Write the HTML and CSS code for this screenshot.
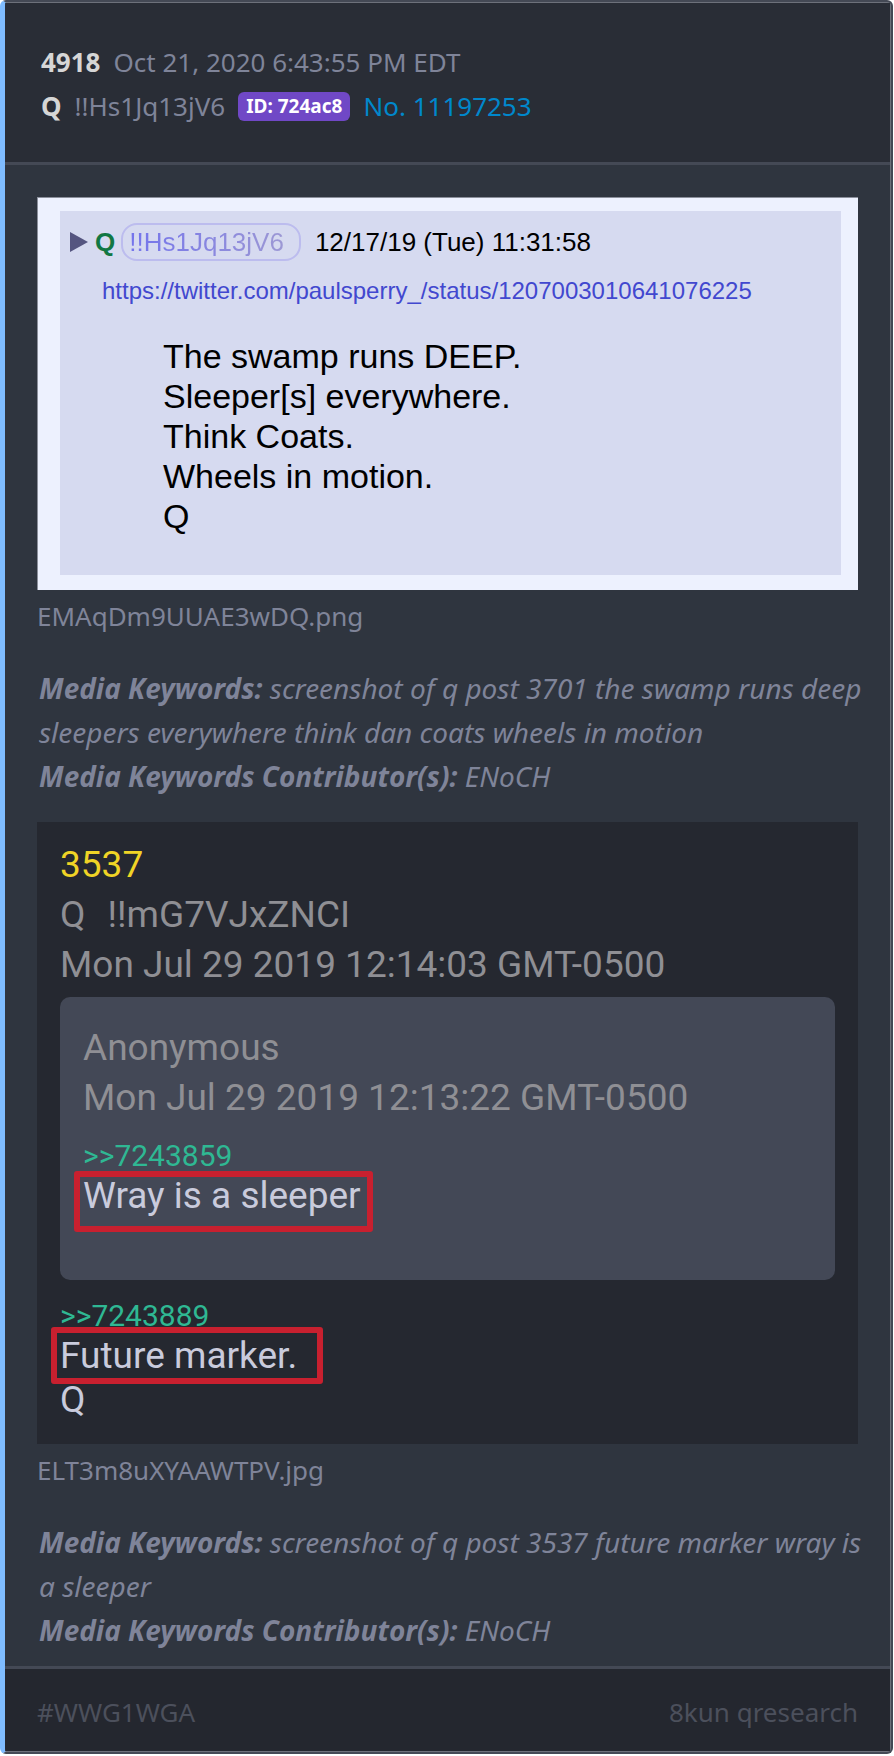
FILE: index.html
```
<!DOCTYPE html>
<html lang="en">
<head>
    <meta charset="UTF-8">
    <meta name="viewport" content="width=device-width, initial-scale=1.0">
    <title>Post 4918</title>
    <link rel="stylesheet" href="styles.css">
</head>
<body>

    <article class="post">

        <!-- Post Header -->
        <header class="post-header">
            <div class="meta">
                <strong>4918</strong>
                <time datetime="2020-10-21T18:43:55-04:00">Oct 21, 2020 6:43:55 PM EDT</time>
            </div>
            <div class="meta">
                <strong>Q</strong>
                <span>!!Hs1Jq13jV6</span>
                <span class="badge">ID: 724ac8</span>
                <a href="#">No. 11197253</a>
            </div>
        </header>

        <!-- Post Media -->
        <main class="post-body">
            <figure class="media">
                <div class="board">
                    <div class="board-post">
                        <div class="board-head">
                            <svg class="arrow" viewBox="0 0 18 20" aria-hidden="true"><path d="M0 0L18 10L0 20Z"/></svg>
                            <b>Q</b>
                            <span class="trip"><span>!!Hs1Jq13jV6</span></span>
                            <span>12/17/19 (Tue) 11:31:58</span>
                        </div>
                        <a class="board-link" href="#">https://twitter.com/paulsperry_/status/1207003010641076225</a>
                        <p class="board-text">The swamp runs DEEP.<br>Sleeper[s] everywhere.<br>Think Coats.<br>Wheels in motion.<br>Q</p>
                    </div>
                </div>
                <figcaption>EMAqDm9UUAE3wDQ.png</figcaption>
            </figure>
            <p class="keywords">
                <strong>Media Keywords:</strong> screenshot of q post 3701 the swamp runs deep sleepers everywhere think dan coats wheels in motion<br>
                <strong>Media Keywords Contributor(s):</strong> ENoCH
            </p>

            <figure class="media">
                <div class="drop">
                    <p class="number">3537</p>
                    <p><span class="name">Q</span>!!mG7VJxZNCI</p>
                    <p>Mon Jul 29 2019 12:14:03 GMT-0500</p>
                    <div class="quote">
                        <p>Anonymous</p>
                        <p>Mon Jul 29 2019 12:13:22 GMT-0500</p>
                        <a class="ref" href="#">&gt;&gt;7243859</a>
                        <p class="marked">Wray is a sleeper</p>
                    </div>
                    <a class="ref" href="#">&gt;&gt;7243889</a>
                    <p class="marked marked-reply">Future marker.</p>
                    <p class="sign">Q</p>
                </div>
                <figcaption>ELT3m8uXYAAWTPV.jpg</figcaption>
            </figure>
            <p class="keywords">
                <strong>Media Keywords:</strong> screenshot of q post 3537 future marker wray is a sleeper<br>
                <strong>Media Keywords Contributor(s):</strong> ENoCH
            </p>
        </main>

        <!-- Post Footer -->
        <footer class="post-footer">
            <span>#WWG1WGA</span>
            <span>8kun qresearch</span>
        </footer>

    </article>

</body>
</html>
```
FILE: styles.css
```
/* General Styles */
* { margin: 0; padding: 0; box-sizing: border-box; }
body { background: #fff; color: #7f8499; font: 26px/44px "Noto Sans", sans-serif; }
a { text-decoration: none; }

/* Post Card */
.post { margin: 0 1px 2px 0; padding: 1px 1px 1px 0; background: #6d717b; overflow: hidden;
    border: 2px solid #444955; border-left: 5px solid #7fbcff; border-radius: 6px; }

/* Header */
.post-header { padding: 37px 32px 34px 36px; background: #292d36; border-bottom: 3px solid #444955; }
.meta { display: flex; flex-wrap: wrap; align-items: center; column-gap: 13px; }
.meta strong { color: #d6d6d6; }
.meta a { color: #0088cc; }
.badge { padding: 0 8px; border-radius: 6px; background: #7048c6; color: #fff;
    font-size: 19px; font-weight: bold; line-height: 29px; }

/* Body */
.post-body { padding: 32px 32px 14px; background: #2f353f; }
figcaption { margin-top: 4px; }
.keywords { margin: 28px -10px 24px 0; padding-left: 2px; font-size: 28px; font-style: italic; }
.keywords:last-child { margin-bottom: 0; }

/* Imageboard capture */
.board { padding: 13px 17px 15px 22px; background: #edf1fe; border: 1px solid #8b8f9b; border-width: 1px 0 0 1px;
    font-family: "Liberation Sans", Arial, sans-serif; color: #000; }
.board-post { padding: 12px 10px 39px; background: #d6daf0; }
.board-head { display: flex; align-items: center; font-size: 26px; line-height: 34px; }
.arrow { width: 18px; height: 20px; margin-right: 7px; fill: #555580; }
.board-head b { margin-right: 6px; color: #117743; }
.trip { margin-right: 14px; padding: 0 15px 0 6px; border: 2px solid #bcbcee; border-radius: 16px; }
.trip span { background: linear-gradient(90deg, #7474ec, #9c98d4); background-clip: text; color: transparent; }
.board-link { display: block; margin: 13px 0 28px 32px; font-size: 24px; line-height: 34px; color: #4248cf; }
.board-text { margin-left: 93px; font-size: 34px; line-height: 40px; }

/* Dark capture */
.drop { padding: 18px 23px 28px; background: #252830; font: 37px/50px Roboto, sans-serif; color: #8f8f94; }
.number { color: #f0d426; }
.name { margin-right: 22px; }
.quote { margin: 7px 0 18px; padding: 26px 23px 48px; border-radius: 10px; background: #434856; }
.ref { display: block; font-size: 30px; line-height: 36px; color: #2fb893; }
.quote .ref { margin-top: 15px; }
.marked { width: fit-content; margin: -3px 0 0 -9px; padding: 0 6px 11px 3px; border: 6px solid #c8202f;
    border-radius: 3px; line-height: 38px; color: #c9cbdc; }
.marked-reply { margin-top: -7px; padding: 4px 20px 3px 3px; }
.sign { line-height: 32px; color: #c9cbdc; }

/* Footer */
.post-footer { display: flex; justify-content: space-between; padding: 21px 32px 17px;
    background: #24272f; border-top: 3px solid #444955; color: #4c505c; }
```
